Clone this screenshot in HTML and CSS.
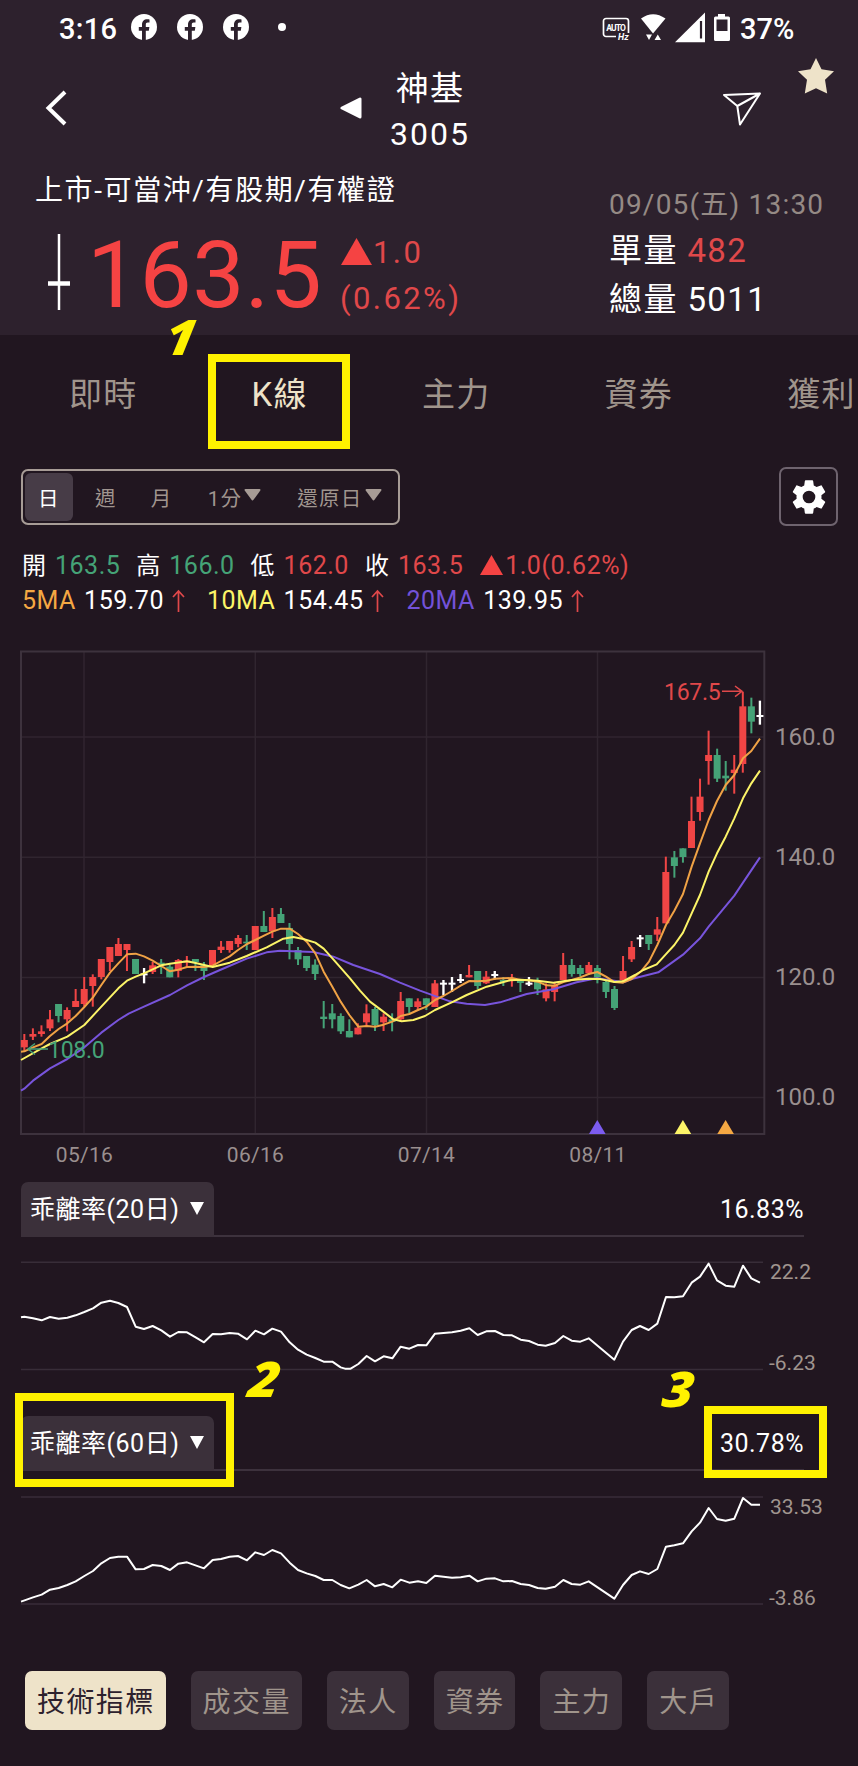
FILE: index.html
```html
<!DOCTYPE html>
<html lang="zh-Hant">
<head>
    <meta charset="UTF-8">
    <meta name="viewport" content="width=device-width, initial-scale=1.0">
    <title>神基 3005 - K線</title>
    <link rel="stylesheet" href="styles.css">
</head>
<body>

    <header class="header">
        <div class="status">
            <span class="clock">3:16</span>
            <svg class="fb" viewBox="0 0 26 26"><circle cx="13" cy="13" r="13" fill="#fff"/><path d="M11 26V16.8H7.8V13H11v-2.300C11 7.200 13 5.200 16.200 5.200c1 0 2.300.2 2.300.2v3.200h-1.700c-1.500 0-2 .9-2 1.900V13h3.600l-.6 3.800h-3V26z" fill="#2d212d"/></svg>
            <svg class="fb" viewBox="0 0 26 26"><circle cx="13" cy="13" r="13" fill="#fff"/><path d="M11 26V16.8H7.8V13H11v-2.300C11 7.200 13 5.200 16.200 5.200c1 0 2.300.2 2.300.2v3.200h-1.700c-1.500 0-2 .9-2 1.900V13h3.600l-.6 3.800h-3V26z" fill="#2d212d"/></svg>
            <svg class="fb" viewBox="0 0 26 26"><circle cx="13" cy="13" r="13" fill="#fff"/><path d="M11 26V16.8H7.8V13H11v-2.300C11 7.200 13 5.200 16.200 5.200c1 0 2.300.2 2.300.2v3.200h-1.700c-1.500 0-2 .9-2 1.900V13h3.600l-.6 3.800h-3V26z" fill="#2d212d"/></svg>
            <span class="dot"></span>
            <!-- auto Hz, wifi, signal, battery -->
            <svg class="sys" width="130" height="32" viewBox="0 0 130 32">
                <path d="M15 25.500H5a2.500 2.500 0 0 1-2.500-2.500V10A2.500 2.500 0 0 1 5 7.500h20a2.500 2.500 0 0 1 2.500 2.500V22" fill="none" stroke="#fff" stroke-width="1.700"/>
                <text class="auto" x="5.300" y="19.500" textLength="19.500">AUTO</text>
                <text class="hz" x="17" y="29">Hz</text>
                <path d="M40 7.500q12-8.500 24.500 0L52 22.500z" fill="#fff"/>
                <path d="M45 23.500h6l-3 5.500zM53.500 29h6.500l-3.200-5.500z" fill="#fff"/>
                <path d="M74 31.200 104 1.500v29.700z" fill="#fff"/>
                <path d="M100 10v17.500" stroke="#2d212d" stroke-width="2.200"/>
                <path d="M117 3h7v2.500h3.500a1.500 1.500 0 0 1 1.500 1.500v21.500a1.500 1.500 0 0 1-1.500 1.500h-13a1.500 1.500 0 0 1-1.500-1.500V7a1.500 1.500 0 0 1 1.500-1.500H117z" fill="#fff"/>
                <path d="M115.500 8.500h11V20h-11z" fill="#2d212d"/>
            </svg>
            <span class="battery">37%</span>
        </div>

        <div class="appbar">
            <svg class="back" viewBox="0 0 22 36"><path d="M20 2 3.500 18 20 34" fill="none" stroke="#fff" stroke-width="4"/></svg>
            <svg class="prev" viewBox="0 0 22 22"><path d="M2 11 20 2v18z" fill="#fff" stroke="#fff" stroke-width="3" stroke-linejoin="round"/></svg>
            <div class="title">
                <div class="name">神基</div>
                <div class="code">3005</div>
            </div>
            <svg class="send" viewBox="0 0 40 36"><path d="M2 3 38 1.500 18 32.500 15.300 14zM15.300 14 38 1.500" fill="none" stroke="#fff" stroke-width="2" stroke-linejoin="round"/></svg>
            <svg class="star" viewBox="0 0 36 36"><path d="M18 0l5.500 11.300L36 13.200l-9 8.600 2.200 13.700L18 30.200 6.800 35.500 9 21.800 0 13.200l12.500-1.900z" fill="#eee3c9"/></svg>
        </div>

        <div class="quote">
            <div class="left">
                <div class="note">上市-可當沖/有股期/有權證</div>
                <div class="price-row">
                    <svg class="bar-icon" viewBox="0 0 22 76"><path d="M11 0v76" stroke="#fff" stroke-width="2.500"/><path d="M0 49.500h22" stroke="#fff" stroke-width="4.500"/></svg>
                    <span class="price">163.5</span>
                    <div class="change">
                        <div><svg class="up" viewBox="0 0 30 26"><path d="M15 0 30 26H0z" fill="#f54343"/></svg>1.0</div>
                        <div>(0.62%)</div>
                    </div>
                </div>
            </div>
            <div class="right">
                <div class="date">09/05(五) 13:30</div>
                <div>單量 <span class="red">482</span></div>
                <div>總量 5011</div>
            </div>
        </div>
    </header>

    <nav class="tabs">
        <a>即時</a>
        <a class="on">K線</a>
        <a>主力</a>
        <a>資券</a>
        <a>獲利</a>
    </nav>

    <div class="toolbar">
        <div class="periods">
            <span class="day">日</span>
            <span class="week">週</span>
            <span class="month">月</span>
            <span class="minute">1分<svg class="down" viewBox="0 0 17 12"><path d="M1.500 1h14l-7 9.500z" fill="#a79c96" stroke="#a79c96" stroke-width="2" stroke-linejoin="round"/></svg></span>
            <span>還原日<svg class="down" viewBox="0 0 17 12"><path d="M1.500 1h14l-7 9.500z" fill="#a79c96" stroke="#a79c96" stroke-width="2" stroke-linejoin="round"/></svg></span>
        </div>
        <button class="gear">
            <svg width="40" height="40" viewBox="0 0 24 24"><path fill="#fff" d="M19.430 12.980c.04-.32.07-.64.07-.98s-.03-.66-.07-.98l2.110-1.650c.19-.15.24-.42.12-.64l-2-3.460c-.12-.22-.39-.3-.61-.22l-2.490 1c-.52-.4-1.080-.73-1.690-.98l-.38-2.650A.488.488 0 0 0 14 2h-4c-.25 0-.46.18-.49.42l-.38 2.650c-.61.25-1.170.59-1.690.98l-2.490-1c-.23-.09-.49 0-.61.22l-2 3.460c-.13.22-.07.49.12.64l2.110 1.650c-.04.32-.07.65-.07.98s.03.66.07.98l-2.110 1.650c-.19.15-.24.42-.12.64l2 3.460c.12.22.39.3.61.22l2.490-1c.52.4 1.080.73 1.690.98l.38 2.650c.03.24.24.42.49.42h4c.25 0 .46-.18.49-.42l.38-2.650c.61-.25 1.170-.59 1.690-.98l2.490 1c.23.09.49 0 .61-.22l2-3.460c.12-.22.07-.49-.12-.64zM12 15.800a3.800 3.800 0 1 1 0-7.600 3.800 3.800 0 0 1 0 7.600z"/></svg>
        </button>
    </div>

    <div class="stats">
        <div class="ohlc">
            <span class="cell"><b>開</b><span class="green">163.5</span></span>
            <span class="cell"><b>高</b><span class="green">166.0</span></span>
            <span class="cell"><b>低</b><span class="red">162.0</span></span>
            <span class="cell"><b>收</b><span class="red">163.5</span></span>
            <span class="red"><svg class="up-small" viewBox="0 0 23 20"><path d="M11.500 0 23 20H0z" fill="#f54343"/></svg>1.0(0.62%)</span>
        </div>
        <div class="ma">
            <span class="ma5">5MA</span> 159.70<svg class="rise" viewBox="0 0 13 23"><path d="M6.500 23V2M1 8l5.500-6L12 8" fill="none" stroke="#e0484a" stroke-width="1.700"/></svg>
            <span class="ma10">10MA</span> 154.45<svg class="rise" viewBox="0 0 13 23"><path d="M6.500 23V2M1 8l5.500-6L12 8" fill="none" stroke="#e0484a" stroke-width="1.700"/></svg>
            <span class="ma20">20MA</span> 139.95<svg class="rise" viewBox="0 0 13 23"><path d="M6.500 23V2M1 8l5.500-6L12 8" fill="none" stroke="#e0484a" stroke-width="1.700"/></svg>
        </div>
    </div>

    <svg class="chart main" width="858" height="542" viewBox="0 0 858 542">
        <path class="grid" d="M21 97H764M21 217.300H764M21 337.500H764M21 457.500H764M84 12V494M255.300 12V494M426.500 12V494M597.500 12V494"/>
        <rect class="frame" x="21" y="11.500" width="743.300" height="482.500"/>
        <g id="candles" transform="translate(0 220) scale(.33333)"></g>
        <g id="lines" transform="translate(0 220) scale(.33333)"></g>
        <path d="M48 409H28M35 403.500l-7 5.500 7 5.500" fill="none" stroke="#45a377" stroke-width="1.500"/>
        <text class="mark" x="48" y="417.500" fill="#45a377">108.0</text>
        <path d="M722 51.300h19M735 46l7 5.300-7 5.300" fill="none" stroke="#e0484a" stroke-width="1.500"/>
        <text class="mark" x="664" y="60" fill="#e0484a">167.5</text>
        <path d="M589 494l8.300-14 8.300 14z" fill="#7c5cf0"/>
        <path d="M674.600 494l8.300-14 8.300 14z" fill="#fcf468"/>
        <path d="M717.300 494l8.300-14 8.300 14z" fill="#f5a843"/>
        <g class="axis">
            <text x="775" y="104.500">160.0</text>
            <text x="775" y="224.500">140.0</text>
            <text x="775" y="344.500">120.0</text>
            <text x="775" y="464.500">100.0</text>
        </g>
        <g class="dates">
            <text x="84.500" y="522">05/16</text>
            <text x="255.500" y="522">06/16</text>
            <text x="426.500" y="522">07/14</text>
            <text x="598" y="522">08/11</text>
        </g>
    </svg>

    <div class="indicator">
        <span class="pick">乖離率(20日)<svg viewBox="0 0 14 13"><path d="M0 0h14L7 13z" fill="#fff"/></svg></span>
        <span class="value">16.83%</span>
    </div>
    <svg class="chart" width="858" height="179" viewBox="0 0 858 179">
        <path class="limit" d="M21 25.300H763M21 132.500H763"/>
        <g id="bias20" transform="translate(0 -107) scale(.33333)"></g>
        <text class="bound" x="770" y="42">22.2</text>
        <text class="bound" x="769" y="132.500">-6.23</text>
    </svg>

    <div class="indicator">
        <span class="pick">乖離率(60日)<svg viewBox="0 0 14 13"><path d="M0 0h14L7 13z" fill="#fff"/></svg></span>
        <span class="value">30.78%</span>
    </div>
    <svg class="chart" width="858" height="200" viewBox="0 0 858 200">
        <path class="limit" d="M21 26H763M21 133H763"/>
        <g id="bias60" transform="translate(0 -91) scale(.33333)"></g>
        <text class="bound" x="770" y="42.500">33.53</text>
        <text class="bound" x="769" y="133.500">-3.86</text>
    </svg>

    <div class="chips">
        <span class="on">技術指標</span>
        <span>成交量</span>
        <span>法人</span>
        <span>資券</span>
        <span>主力</span>
        <span>大戶</span>
    </div>

    <!-- tutorial marks -->
    <div class="box box1"></div>
    <div class="box box2"></div>
    <div class="box box3"></div>
    <div class="step step1">1</div>
    <div class="step step2">2</div>
    <div class="step step3">3</div>

    <script src="chart.js"></script>
</body>
</html>
```
FILE: styles.css
```css
* {
    box-sizing: border-box;
}
body {
    margin: 0;
    width: 858px;
    height: 1766px;
    position: relative;
    overflow: hidden;
    background: #211620;
    color: #fff;
    font-family: Roboto, "Noto Sans CJK TC", sans-serif;
}
svg {
    display: block;
    flex-shrink: 0;
}
.red {
    color: #e0484a;
}
.green {
    color: #45a377;
}

/* header */
.header {
    height: 335px;
    background: #2d212d;
}
.status {
    display: flex;
    align-items: center;
    height: 54px;
    padding: 0 0 0 59px;
    font-size: 29px;
    font-weight: 500;
}
.clock {
    width: 72px;
    padding-top: 3px;
    letter-spacing: 0.3px;
}
.fb {
    width: 26px;
    height: 26px;
    margin-right: 20px;
}
.dot {
    width: 8px;
    height: 8px;
    margin-left: 9px;
    border-radius: 50%;
    background: #fff;
}
.sys {
    margin-left: 315px;
}
.auto {
    font-size: 8.5px;
    font-weight: 700;
    fill: #fff;
}
.hz {
    font-size: 9px;
    font-weight: 700;
    font-style: italic;
    fill: #fff;
}
.battery {
    margin-left: 9px;
    padding-top: 3px;
}
.appbar {
    display: flex;
    align-items: flex-start;
    height: 100px;
}
.back {
    width: 22px;
    height: 36px;
    margin: 36px 0 0 45px;
}
.prev {
    width: 22px;
    height: 22px;
    margin: 43px 0 0 273px;
}
.title {
    width: 96px;
    margin: 12px 0 0 20px;
    text-align: center;
}
.name {
    font-size: 33px;
    line-height: 46px;
    letter-spacing: 1.3px;
}
.code {
    font-size: 32px;
    line-height: 45px;
    letter-spacing: 2px;
}
.send {
    width: 40px;
    height: 36px;
    margin: 38px 0 0 244px;
}
.star {
    width: 36px;
    height: 36px;
    margin: 4px 0 0 36px;
}
.quote {
    display: flex;
    justify-content: space-between;
    padding: 18px 0 0 35px;
}
.note {
    padding-top: 1px;
    font-size: 28px;
    line-height: 36px;
    letter-spacing: 1.6px;
}
.price-row {
    display: flex;
    align-items: center;
    height: 90px;
    margin-top: 22px;
}
.bar-icon {
    width: 22px;
    height: 76px;
    margin: -8px 0 0 13px;
}
.price {
    width: 253px;
    margin-left: 17px;
    color: #f54343;
    font-size: 93px;
    line-height: 90px;
    letter-spacing: 0.3px;
}
.change {
    color: #e0484a;
    font-size: 31px;
    line-height: 46px;
    letter-spacing: 2.4px;
}
.change div {
    display: flex;
    align-items: center;
}
.up {
    width: 31px;
    height: 27px;
    margin: -4px 1px 0 1px;
}
.right {
    width: 249px;
    margin-top: 12px;
    font-size: 33px;
    line-height: 49px;
    letter-spacing: 1.4px;
}
.date {
    color: #958a85;
    font-size: 28px;
    line-height: 42px;
    letter-spacing: 1.2px;
}

/* tabs */
.tabs {
    display: flex;
    gap: 114px;
    height: 116px;
    padding-left: 69px;
    overflow: hidden;
    white-space: nowrap;
    color: #a0958c;
    font-size: 33px;
    line-height: 119px;
    letter-spacing: 1.3px;
}
.tabs .on {
    color: #eee3c9;
}
.toolbar {
    display: flex;
    justify-content: space-between;
    align-items: center;
    height: 59px;
    margin: 16px 20px 0 21px;
}
.periods {
    display: flex;
    align-items: center;
    width: 379px;
    height: 56px;
    padding-left: 2px;
    border: 2px solid #a79c96;
    border-radius: 7px;
    color: #a0958f;
    font-size: 20.5px;
    letter-spacing: 1.3px;
    white-space: nowrap;
}
.periods span {
    display: flex;
    align-items: center;
}
.periods .day {
    justify-content: center;
    width: 48px;
    height: 48px;
    border-radius: 6px;
    background: #473c47;
    color: #fff;
}
.week {
    margin-left: 22px;
}
.month {
    margin-left: 34px;
}
.minute {
    margin: 0 36px 0 35px;
}
.down {
    width: 17px;
    height: 12px;
    margin: -3px 0 0 2px;
}
.gear {
    display: flex;
    align-items: center;
    justify-content: center;
    width: 59px;
    height: 59px;
    padding: 0;
    border: 2px solid #6e636e;
    border-radius: 7px;
    background: none;
}

/* open / high / low / close */
.stats {
    height: 92px;
    padding: 23px 0 0 22px;
    font-size: 25px;
    letter-spacing: 0.5px;
    white-space: nowrap;
}
.ohlc {
    display: flex;
    line-height: 34px;
}
.cell {
    width: 114.300px;
}
.cell b {
    display: inline-block;
    width: 33px;
    font-size: 24px;
    font-weight: 400;
}
.ohlc > .red {
    display: flex;
    align-items: center;
}
.up-small {
    width: 23px;
    height: 20px;
    margin: -2px 2px 0 1px;
}
.ma {
    display: flex;
    align-items: center;
    height: 35px;
    white-space: pre;
}
.ma span {
    margin-right: 1.5px;
}
.rise {
    width: 13px;
    height: 23px;
    margin: 0 22px 0 8px;
}
.ma5 {
    color: #f5a843;
}
.ma10 {
    color: #fcf468;
}
.ma20 {
    color: #7352d8;
}

/* charts */
.main {
    margin-top: 22px;
}
.grid {
    fill: none;
    stroke: #30252f;
    stroke-width: 1.5;
}
.frame {
    fill: none;
    stroke: #3d323d;
    stroke-width: 2;
}
.limit {
    fill: none;
    stroke: #382d38;
    stroke-width: 1.5;
}
.line {
    fill: none;
    stroke-width: 6;
    stroke-linejoin: round;
}
.mark {
    font-size: 23px;
    letter-spacing: -0.3px;
}
.axis {
    fill: #9a8f8f;
    font-size: 24px;
}
.dates {
    fill: #9a8f8f;
    font-size: 21px;
    letter-spacing: 0.3px;
    text-anchor: middle;
}
.bound {
    fill: #a0958f;
    font-size: 21px;
}
.indicator {
    display: flex;
    justify-content: space-between;
    height: 55px;
    margin: 0 54px 0 21px;
    border-bottom: 2px solid #3d323d;
    line-height: 55px;
    letter-spacing: 0.5px;
}
.pick {
    display: flex;
    align-items: center;
    width: 193px;
    height: 55px;
    padding-left: 9px;
    border-radius: 7px 7px 0 0;
    background: #3b303a;
    font-size: 25px;
}
.pick svg {
    width: 14px;
    height: 13px;
    margin: -2px 0 0 11px;
}
.value {
    font-size: 25px;
}
.chips {
    display: flex;
    gap: 25px;
    margin-left: 25px;
}
.chips span {
    height: 59px;
    padding: 0 11px 0 12px;
    border-radius: 7px;
    background: #3b303a;
    color: #a0958c;
    font-size: 28px;
    line-height: 63px;
    letter-spacing: 1.4px;
}
.chips .on {
    background: #eee3c9;
    color: #2d212d;
}

/* tutorial marks */
.box {
    position: absolute;
    border: 8px solid #fff200;
}
.box1 {
    left: 208px;
    top: 354px;
    width: 142px;
    height: 95px;
}
.box2 {
    left: 15px;
    top: 1393px;
    width: 219px;
    height: 94px;
}
.box3 {
    left: 704px;
    top: 1406px;
    width: 123px;
    height: 72px;
}
.step {
    position: absolute;
    color: #fff200;
    font-family: "Open Sans", sans-serif;
    font-size: 49px;
    font-style: italic;
    font-weight: 800;
    line-height: 50px;
    transform: skewX(-10deg) scaleX(1.08);
}
.step1 {
    left: 167px;
    top: 311px;
}
.step2 {
    left: 251px;
    top: 1353px;
}
.step3 {
    left: 665px;
    top: 1363px;
}
```
FILE: chart.js
```js
var NS = "http://www.w3.org/2000/svg";
var colors = { r: "#f04545", g: "#45a377", w: "#ffffff" };

// [high, body top, body bottom, low, color]
var bars = [
    [522,540,562,572,"r"],[505,522,530,540,"r"],[496,514,522,530,"r"],[450,478,505,513,"r"],[432,432,468,487,"g"],
    [442,450,478,514,"r"],[387,423,441,441,"r"],[351,387,432,440,"r"],[343,351,378,440,"r"],[297,297,351,358,"r"],
    [261,261,306,333,"r"],[234,252,288,288,"r"],[252,252,270,333,"r"],[297,297,342,342,"g"],[324,340,346,370,"w"],
    [306,316,336,342,"r"],[297,308,313,342,"g"],[314,320,352,352,"g"],[297,300,333,352,"r"],[288,302,308,320,"r"],
    [297,297,306,333,"g"],[306,315,333,360,"g"],[270,270,315,320,"r"],[243,260,270,279,"r"],[243,243,270,278,"r"],
    [225,234,252,262,"r"],[225,245,250,270,"g"],[198,198,270,270,"r"],[153,198,216,216,"g"],[144,171,214,234,"r"],
    [144,162,189,189,"g"],[189,204,252,298,"g"],[261,270,298,315,"g"],[288,288,324,333,"g"],[298,314,342,360,"g"],
    [423,470,477,505,"g"],[432,460,478,505,"g"],[460,468,514,522,"g"],[478,513,532,532,"g"],[490,503,523,523,"r"],
    [433,460,487,500,"r"],[441,447,495,513,"g"],[460,470,487,513,"r"],[460,478,486,514,"g"],[396,423,478,484,"r"],
    [415,415,441,460,"g"],[415,424,441,452,"r"],[415,415,435,450,"g"],[360,370,441,441,"r"],[360,368,374,405,"w"],
    [351,368,374,396,"w"],[342,357,363,369,"w"],[315,345,352,352,"r"],[333,333,378,387,"g"],[333,350,370,372,"r"],
    [333,342,348,358,"w"],[351,360,366,378,"g"],[342,354,360,380,"r"],[360,360,369,396,"g"],[351,368,374,378,"w"],
    [353,366,388,405,"g"],[370,388,415,424,"r"],[368,375,396,424,"r"],[279,315,360,360,"r"],[297,315,342,350,"g"],
    [315,324,342,350,"g"],[306,315,340,345,"r"],[315,324,352,370,"g"],[360,366,396,414,"g"],[378,387,444,450,"g"],
    [288,333,360,365,"r"],[243,261,298,306,"r"],[225,232,238,261,"w"],[225,225,252,270,"g"],[171,208,224,243,"r"],
    [-10,36,190,190,"r"],[-27,-8,18,53,"g"],[-35,-35,-9,8,"g"],[-190,-117,-36,-36,"r"],[-244,-190,-144,-118,"r"],
    [-388,-315,-297,-226,"r"],[-334,-315,-244,-234,"g"],[-297,-253,-245,-208,"g"],[-315,-271,-261,-199,"r"],
    [-505,-461,-288,-262,"r"],[-487,-461,-415,-380,"g"],[-478,-435,-429,-406,"w"]
];

var ma5 = "63,575 73,574 99,562 125,552 150,528 176,507 202,490 227,468 253,441 279,412 304,375 330,338 355,310 381,283 407,281 432,289 458,302 484,318 510,334 535,329 561,321 587,320 612,321 638,317 663,303 689,289 714,270 741,252 766,240 792,227 817,215 843,206 869,206 894,222 920,245 946,280 971,335 997,380 1022,425 1048,465 1075,500 1100,498 1125,500 1151,494 1177,485 1202,468 1228,462 1254,450 1279,440 1305,420 1330,408 1356,393 1382,377 1408,363 1433,364 1459,362 1485,356 1510,355 1536,354 1562,360 1587,361 1613,365 1640,376 1665,377 1690,366 1715,360 1741,352 1766,342 1792,336 1818,350 1843,366 1869,368 1895,357 1925,332 1947,305 1972,255 1998,195 2023,152 2049,102 2075,20 2100,-50 2126,-120 2151,-177 2177,-225 2203,-255 2229,-305 2254,-327 2280,-364";
var ma10 = "63,600 125,565 150,552 202,530 253,495 304,440 355,385 381,362 407,350 432,340 484,316 510,311 561,304 587,309 638,321 689,308 740,288 800,262 850,236 880,231 910,237 946,248 971,266 1000,298 1050,355 1080,392 1110,425 1150,455 1180,478 1205,484 1240,480 1275,468 1305,450 1360,425 1400,405 1460,380 1530,361 1562,359 1613,362 1660,368 1715,360 1766,356 1800,357 1843,366 1869,364 1905,345 1930,330 1970,313 2000,280 2023,255 2049,218 2075,160 2100,105 2126,35 2151,-20 2177,-70 2203,-125 2229,-185 2254,-230 2280,-268";
var ma20 = "63,692 73,686 99,662 150,625 202,597 253,562 304,518 355,480 386,461 432,440 510,405 561,376 612,351 660,330 740,296 800,277 840,272 940,276 1000,290 1060,315 1140,342 1200,368 1260,392 1310,410 1350,424 1400,431 1455,435 1500,427 1580,402 1660,388 1730,367 1790,355 1843,362 1870,367 1895,357 1975,337 2049,284 2100,235 2126,200 2203,107 2229,68 2280,-8";

var bias20 = "63,562 73,560 99,565 125,571 150,561 176,566 202,563 227,556 253,546 279,535 304,518 330,512 355,519 381,531 407,590 432,597 458,588 484,601 510,620 535,606 561,607 587,622 612,637 638,612 663,613 689,609 714,611 741,628 766,602 792,613 817,596 843,605 869,637 894,659 920,674 946,684 971,695 997,695 1022,712 1035,716 1052,716 1075,702 1100,678 1125,694 1151,679 1177,685 1202,650 1228,656 1254,645 1279,646 1305,611 1356,607 1382,602 1408,595 1433,615 1459,604 1485,603 1510,615 1536,616 1562,629 1587,633 1613,644 1637,647 1665,639 1690,618 1715,632 1741,635 1766,625 1843,689 1869,635 1895,600 1920,588 1946,600 1972,581 1998,501 2023,502 2049,499 2075,458 2100,440 2126,401 2151,451 2177,467 2203,470 2229,407 2254,445 2280,458";
var bias60 = "63,665 99,652 125,644 150,629 176,624 202,615 227,604 253,588 279,573 304,550 330,534 355,530 381,530 407,568 432,567 458,555 484,558 510,570 535,551 561,547 612,565 638,540 663,537 689,530 714,528 741,541 766,517 792,525 817,510 843,520 869,548 894,570 920,580 946,588 971,600 997,600 1022,615 1048,625 1075,614 1100,600 1125,619 1151,612 1177,622 1202,599 1228,608 1254,604 1279,609 1305,587 1356,593 1382,592 1408,587 1433,604 1459,596 1485,595 1510,604 1536,603 1562,612 1587,615 1613,624 1637,626 1665,620 1690,600 1715,612 1741,614 1766,604 1843,656 1869,615 1895,585 1920,574 1946,582 1972,567 1998,500 2023,496 2049,490 2075,454 2100,428 2126,384 2151,417 2177,422 2203,416 2229,354 2254,374 2280,374";

function addRect(parent, x, y, w, h, fill) {
    var rect = document.createElementNS(NS, "rect");
    rect.setAttribute("x", x);
    rect.setAttribute("y", y);
    rect.setAttribute("width", w);
    rect.setAttribute("height", h);
    rect.setAttribute("fill", fill);
    parent.appendChild(rect);
}

function addLine(id, points, color) {
    var line = document.createElementNS(NS, "polyline");
    line.setAttribute("class", "line");
    line.setAttribute("points", points);
    line.setAttribute("stroke", color);
    document.getElementById(id).appendChild(line);
}

var candles = document.getElementById("candles");
bars.forEach(function (bar, i) {
    var x = 73 + i * 25.66;
    var fill = colors[bar[4]];
    var wick = bar[4] === "w" ? 7 : 6;
    addRect(candles, x - wick / 2, bar[0], wick, bar[3] - bar[0], fill); // wick
    addRect(candles, x - 10.5, bar[1], 21, bar[2] - bar[1], fill); // body
});

addLine("lines", ma20, "#7854dc");
addLine("lines", ma5, "#f0a245");
addLine("lines", ma10, "#fcf468");
addLine("bias20", bias20, "#ffffff");
addLine("bias60", bias60, "#ffffff");
```
